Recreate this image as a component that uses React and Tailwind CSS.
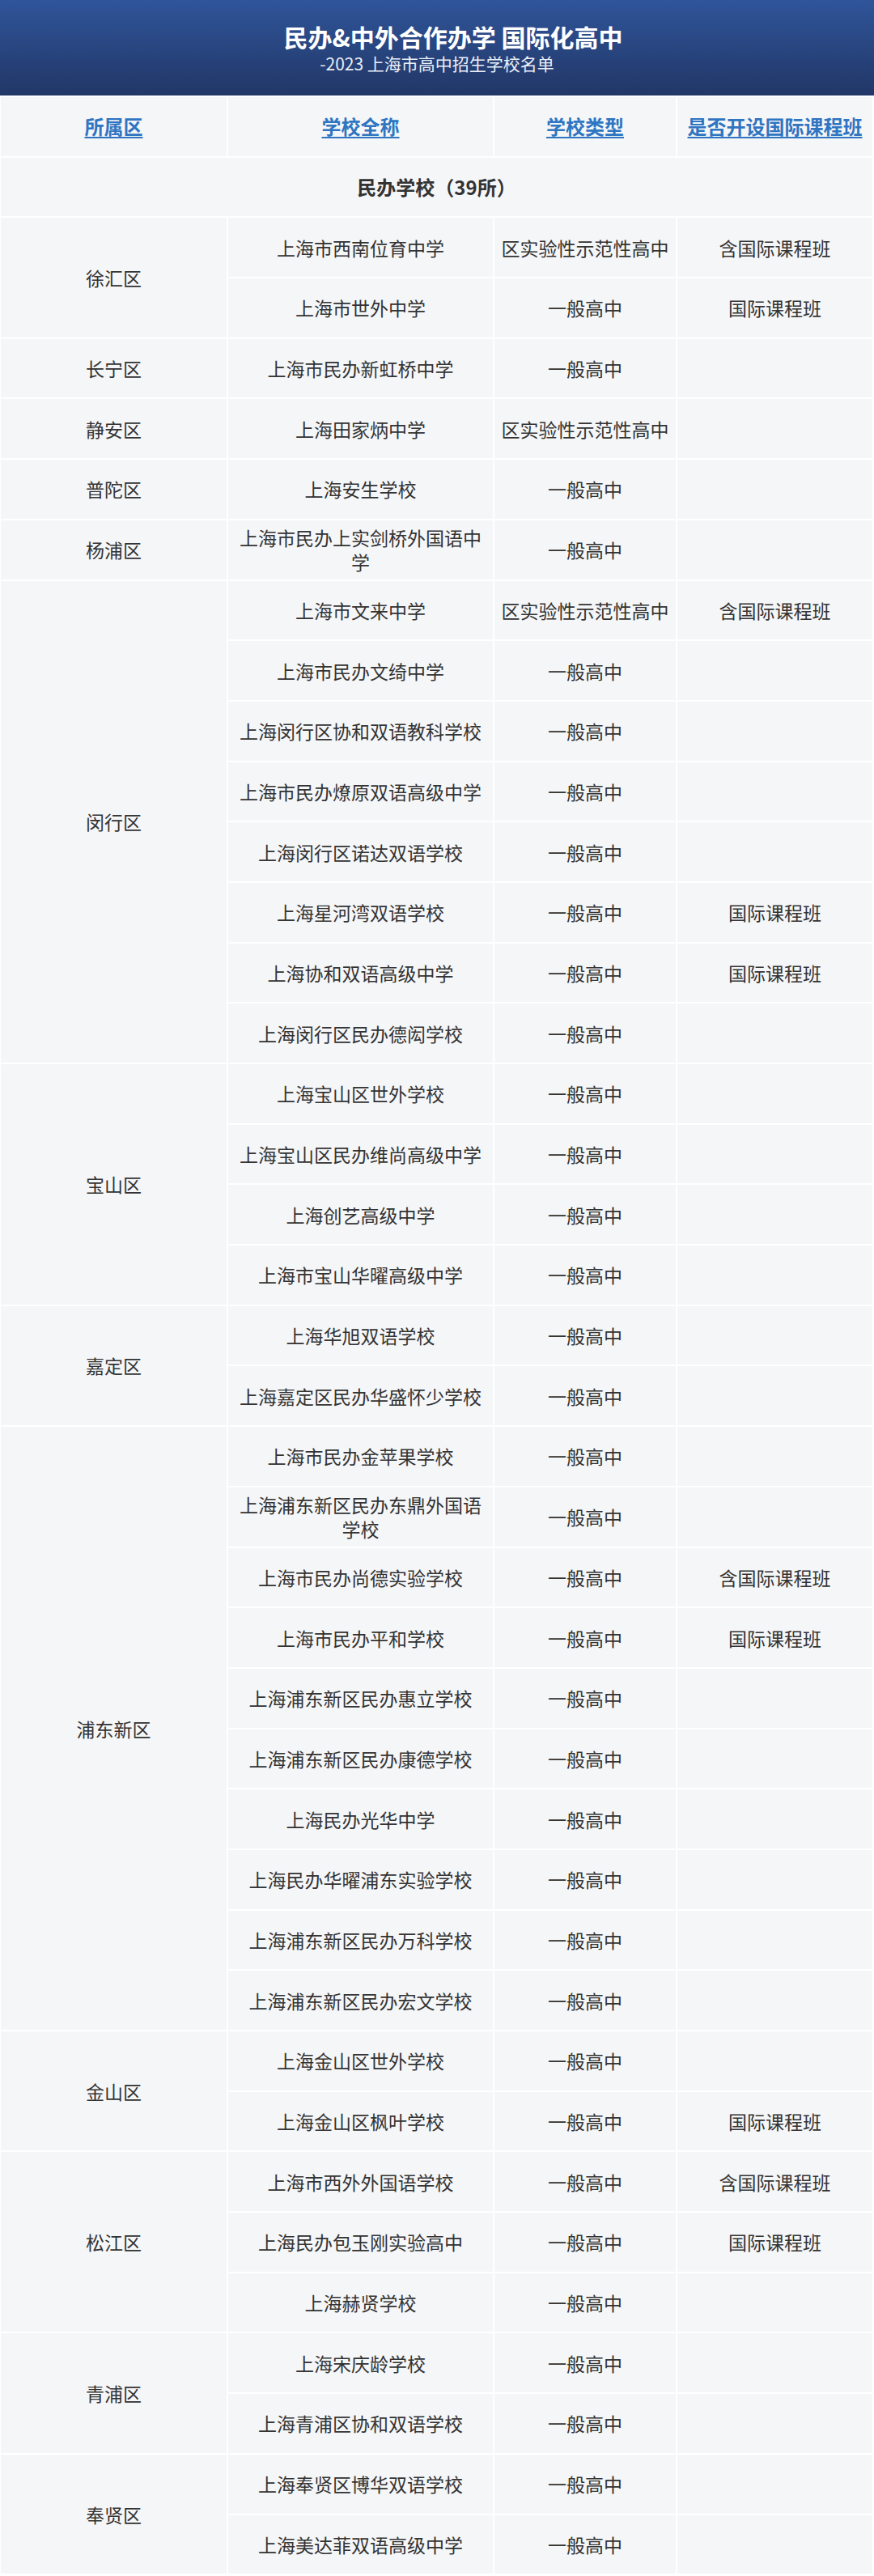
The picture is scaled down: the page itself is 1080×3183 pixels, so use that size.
import React from 'react';

const GROUPS = [
  { district: '徐汇区', schools: [
    ['上海市西南位育中学', '区实验性示范性高中', '含国际课程班'],
    ['上海市世外中学', '一般高中', '国际课程班'],
  ] },
  { district: '长宁区', schools: [['上海市民办新虹桥中学', '一般高中', '']] },
  { district: '静安区', schools: [['上海田家炳中学', '区实验性示范性高中', '']] },
  { district: '普陀区', schools: [['上海安生学校', '一般高中', '']] },
  { district: '杨浦区', schools: [['上海市民办上实剑桥外国语中学', '一般高中', '']] },
  { district: '闵行区', schools: [
    ['上海市文来中学', '区实验性示范性高中', '含国际课程班'],
    ['上海市民办文绮中学', '一般高中', ''],
    ['上海闵行区协和双语教科学校', '一般高中', ''],
    ['上海市民办燎原双语高级中学', '一般高中', ''],
    ['上海闵行区诺达双语学校', '一般高中', ''],
    ['上海星河湾双语学校', '一般高中', '国际课程班'],
    ['上海协和双语高级中学', '一般高中', '国际课程班'],
    ['上海闵行区民办德闳学校', '一般高中', ''],
  ] },
  { district: '宝山区', schools: [
    ['上海宝山区世外学校', '一般高中', ''],
    ['上海宝山区民办维尚高级中学', '一般高中', ''],
    ['上海创艺高级中学', '一般高中', ''],
    ['上海市宝山华曜高级中学', '一般高中', ''],
  ] },
  { district: '嘉定区', schools: [
    ['上海华旭双语学校', '一般高中', ''],
    ['上海嘉定区民办华盛怀少学校', '一般高中', ''],
  ] },
  { district: '浦东新区', schools: [
    ['上海市民办金苹果学校', '一般高中', ''],
    ['上海浦东新区民办东鼎外国语学校', '一般高中', ''],
    ['上海市民办尚德实验学校', '一般高中', '含国际课程班'],
    ['上海市民办平和学校', '一般高中', '国际课程班'],
    ['上海浦东新区民办惠立学校', '一般高中', ''],
    ['上海浦东新区民办康德学校', '一般高中', ''],
    ['上海民办光华中学', '一般高中', ''],
    ['上海民办华曜浦东实验学校', '一般高中', ''],
    ['上海浦东新区民办万科学校', '一般高中', ''],
    ['上海浦东新区民办宏文学校', '一般高中', ''],
  ] },
  { district: '金山区', schools: [
    ['上海金山区世外学校', '一般高中', ''],
    ['上海金山区枫叶学校', '一般高中', '国际课程班'],
  ] },
  { district: '松江区', schools: [
    ['上海市西外外国语学校', '一般高中', '含国际课程班'],
    ['上海民办包玉刚实验高中', '一般高中', '国际课程班'],
    ['上海赫贤学校', '一般高中', ''],
  ] },
  { district: '青浦区', schools: [
    ['上海宋庆龄学校', '一般高中', ''],
    ['上海青浦区协和双语学校', '一般高中', ''],
  ] },
  { district: '奉贤区', schools: [
    ['上海奉贤区博华双语学校', '一般高中', ''],
    ['上海美达菲双语高级中学', '一般高中', ''],
  ] },
];

// rowspan classes written out in full so Tailwind picks them up
const SPAN = {
  1: 'row-span-1',
  2: 'row-span-2',
  3: 'row-span-3',
  4: 'row-span-4',
  8: 'row-span-8',
  10: 'row-span-10',
};

const FONT = { fontFamily: '"Noto Sans CJK SC", "Noto Sans", sans-serif' };

function Cell({ children, className = '' }) {
  return (
    <div className={`bg-[#f5f6f8] flex items-center justify-center text-center px-1.5 text-[23px] leading-[30px] text-[#333333] ${className}`}>
      {children}
    </div>
  );
}

function HeadCell({ children }) {
  return (
    <div className="bg-[#f5f6f8] flex items-center justify-center text-center">
      <span className="text-[24px] font-bold text-[#2e75c2] underline decoration-2 underline-offset-[3px]">{children}</span>
    </div>
  );
}

export default function App() {
  return (
    <div className="w-[1080px] bg-white" style={FONT}>
      {/* ── 顶部标题栏 ── */}
      <header className="h-[118px] bg-gradient-to-b from-[#30559a] to-[#213767] flex flex-col items-center justify-center">
        <h1 className="text-[30px] leading-[38px] font-bold text-white pl-10">民办&amp;中外合作办学 国际化高中</h1>
        <p className="text-[21px] leading-[28px] text-[#eaeef6]">-2023 上海市高中招生学校名单</p>
      </header>

      {/* ── 表格 ── */}
      <div className="grid grid-cols-[279px_327px_224px_241px] auto-rows-[72.7px] gap-[2px] px-px pt-[2px]">
        <HeadCell>所属区</HeadCell>
        <HeadCell>学校全称</HeadCell>
        <HeadCell>学校类型</HeadCell>
        <HeadCell>是否开设国际课程班</HeadCell>

        <div className="col-span-4 bg-[#f5f6f8] flex items-center justify-center">
          <span className="text-[24px] font-bold text-[#333333]">民办学校（39所）</span>
        </div>

        {GROUPS.map((g) => (
          <React.Fragment key={g.district}>
            <Cell className={SPAN[g.schools.length]}>{g.district}</Cell>
            {g.schools.map(([name, type, intl]) => (
              <React.Fragment key={name}>
                <Cell>{name}</Cell>
                <Cell>{type}</Cell>
                <Cell>{intl}</Cell>
              </React.Fragment>
            ))}
          </React.Fragment>
        ))}
      </div>
    </div>
  );
}
